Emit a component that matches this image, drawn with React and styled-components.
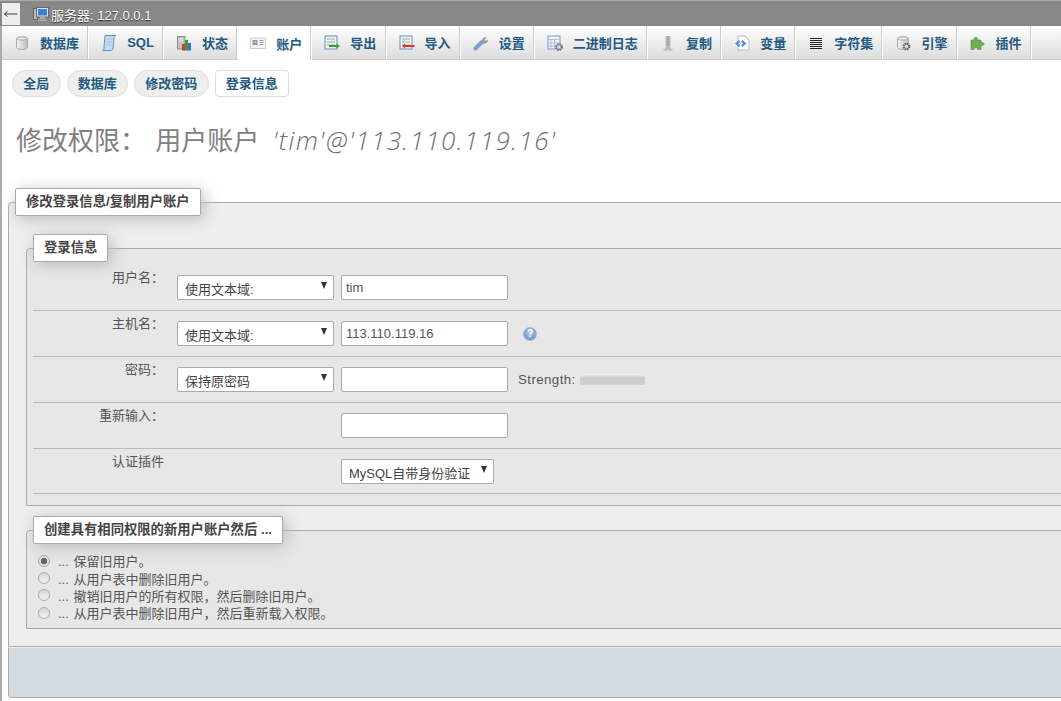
import React from 'react';
import styled, { createGlobalStyle } from 'styled-components';

const GlobalStyle = createGlobalStyle`
  html, body {
    margin: 0;
    padding: 0;
    background: #fff;
    overflow: hidden;
  }
  body {
    font-family: "Liberation Sans", "Noto Sans CJK SC", sans-serif;
    font-size: 13px;
    color: #444;
  }
`;

const Page = styled.div`
  width: 1061px;
  height: 701px;
  overflow: hidden;
`;

const TopBar = styled.div`
  height: 23px;
  padding: 2px 0 0 2px;
  background: #888;
  border-top: 1px solid #aaa;
  border-bottom: 1px solid #ddd;
  display: flex;
  align-items: flex-start;
  box-sizing: content-box;
  margin-bottom: -1px;
`;

const BackButton = styled.div`
  width: 18px;
  height: 22px;
  background: #eee;
  display: flex;
  align-items: center;
  justify-content: center;
`;

const ServerLink = styled.div`
  margin-left: 13px;
  height: 22px;
  display: flex;
  align-items: center;
  gap: 2px;
  color: #fff;
  font-size: 13px;
  text-shadow: 0 1px 1px #333;
`;

const Body = styled.div`
  border-left: 2px solid #aaa;
  height: 675px;
  overflow: hidden;
`;

const Menu = styled.nav`
  height: 33px;
  display: flex;
  background: linear-gradient(#fff, #dcdcdc);
  border-bottom: 1px solid #ccc;
`;

const MenuTab = styled.a`
  display: flex;
  align-items: center;
  gap: 10px;
  height: ${(p) => (p.$active ? '34px' : '33px')};
  padding: 0 9.15px 0 12px;
  border-right: 1px solid #fff;
  box-shadow: inset -1px 0 0 #ccc;
  color: #235a81;
  font-weight: bold;
  font-size: 13px;
  white-space: nowrap;
  background: ${(p) => (p.$active ? '#fff' : 'transparent')};
`;

const SubNav = styled.div`
  display: flex;
  gap: 6px;
  padding: 10px 0 0 10px;
`;

const SubTab = styled.a`
  height: 25px;
  line-height: 25px;
  padding: 0 10.25px;
  border: 1px solid #ddd;
  border-radius: ${(p) => (p.$active ? '4px' : '14px')};
  background: ${(p) => (p.$active ? '#fff' : '#eee')};
  color: #235a81;
  font-weight: bold;
`;

const Title = styled.h2`
  margin: 23px 0 0 14px;
  height: 40px;
  line-height: 40px;
  font-size: 26px;
  font-weight: normal;
  color: #808080;
  white-space: pre;
  word-spacing: 2px;
`;

const Host = styled.em`
  margin-left: 4px;
  font-family: "Open Sans", "Liberation Sans", sans-serif;
  font-style: italic;
  font-weight: 300;
  letter-spacing: 1.4px;
  color: #6f6f6f;
`;

const Main = styled.form`
  margin: 28px 0 0 6px;
  width: 1120px;
`;

const OuterSet = styled.fieldset`
  margin: 0;
  padding: 0 17px 17px;
  min-width: 0;
  background: #eee;
  border: 1px solid #aaa;
  border-radius: 4px 0 0 0;
  box-sizing: border-box;
`;

const InnerSet = styled.fieldset`
  margin: ${(p) => (p.$first ? '18px 0 0' : '10px 0 0')};
  padding: 0 6px;
  min-width: 0;
  background: #e7e7e7;
  border: 1px solid #aaa;
  border-radius: 4px 0 0 0;
`;

const Legend = styled.legend`
  height: 26px;
  line-height: 26px;
  padding: 0 10px;
  margin-left: ${(p) => p.$offset || 0}px;
  background: #fff;
  border: 1px solid #aaa;
  border-radius: 2px;
  box-shadow: 3px 3px 15px #bbb;
  font-size: 13.33px;
  font-weight: bold;
  color: #444;
  white-space: nowrap;
`;

const Rows = styled.div`
  padding: 3px 0 11px;
`;

const Row = styled.div`
  display: flex;
  align-items: flex-start;
  height: ${(p) => (p.$last ? '34px' : '35px')};
  padding: 10px 0 0;
  border-bottom: 1px solid #bbb;
`;

const Label = styled.label`
  width: 131px;
  flex: none;
  margin: -7px 13px 0 0;
  height: 20px;
  line-height: 20px;
  text-align: right;
  color: #555;
`;

const SelectBox = styled.div`
  position: relative;
  width: ${(p) => p.$width}px;
  height: 25px;
  flex: none;
  margin-right: ${(p) => p.$gap || 0}px;
`;

const Select = styled.select`
  appearance: none;
  width: 100%;
  height: 100%;
  padding: 3px 0 0 7px;
  background: #fff;
  border: 1px solid #aaa;
  border-radius: 2px;
  font: inherit;
  color: #444;
  box-sizing: border-box;
`;

const Arrow = styled.span`
  position: absolute;
  top: 7px;
  right: 7px;
  border-left: 3px solid transparent;
  border-right: 3px solid transparent;
  border-top: 7px solid #333;
`;

const TextInput = styled.input`
  width: 167px;
  height: 25px;
  flex: none;
  padding: 0 4px;
  background: #fff;
  border: 1px solid #aaa;
  border-radius: 2px;
  font: inherit;
  color: #555;
  box-sizing: border-box;
`;

const Spacer = styled.div`
  width: ${(p) => p.$width}px;
  flex: none;
`;

const HelpIcon = styled.span`
  width: 14px;
  height: 14px;
  margin: 6px 0 0 15px;
  border-radius: 50%;
  background: radial-gradient(circle at 50% 40%, #b7cbe6, #5a86c4);
  border: 1px solid #9db6d8;
  box-sizing: border-box;
  color: #fff;
  font-size: 10px;
  font-weight: bold;
  line-height: 12px;
  text-align: center;
`;

const Strength = styled.div`
  display: flex;
  align-items: center;
  height: 25px;
  margin-left: 10px;
  gap: 4px;
  color: #555;
  font-size: 13.33px;
  letter-spacing: 0.4px;
`;

const Meter = styled.div`
  width: 65px;
  height: 11px;
  background: linear-gradient(#f2f2f2, #ccc 35%, #d2d2d2);
`;

const Options = styled.div`
  padding: 8px 0 7px;
`;

const Option = styled.label`
  display: flex;
  align-items: center;
  height: 17.33px;
  color: #555;
  white-space: nowrap;
  word-spacing: 1px;
`;

const Radio = styled.input.attrs({ type: 'radio' })`
  appearance: none;
  width: 12px;
  height: 12px;
  margin: 0 8px 0 5px;
  flex: none;
  border: 1px solid #aaa;
  border-radius: 50%;
  background: ${(p) =>
    p.defaultChecked
      ? 'radial-gradient(circle, #666 0 3px, #e4e4e4 3.6px)'
      : 'linear-gradient(#d8d8d8, #f2f2f2)'};
`;

const Footer = styled.div`
  height: 49px;
  background: #d3dce3;
  border: 1px solid #aaa;
  border-top: 1px solid #eee;
  border-radius: 0 0 0 4px;
`;

const Gear = ({ x, y }) => (
  <>
    <circle cx={x} cy={y} r="2.8" fill="none" stroke="#666" strokeWidth="2.2" strokeDasharray="1.5 0.7" />
    <circle cx={x} cy={y} r="1.4" fill="#ddd" />
  </>
);

const BackArrow = () => (
  <svg width="14" height="8" viewBox="0 0 14 8">
    <path d="M0.500 4H13.500M0.500 4 3.500 1.500M0.500 4 3.500 6.500" fill="none" stroke="#4a3a3a" />
  </svg>
);

const DbIcon = ({ gear }) => (
  <svg width="16" height="16" viewBox="0 0 16 16">
    <defs>
      <linearGradient id="can">
        <stop offset="0" stopColor="#f4f4f4" />
        <stop offset="1" stopColor="#bdbdbd" />
      </linearGradient>
    </defs>
    <path d="M2.500 3.500C2.500 1.500 13.500 1.500 13.500 3.500V12.500C13.500 15 2.500 15 2.500 12.500Z" fill="url(#can)" stroke="#aaa" />
    <ellipse cx="8" cy="3.500" rx="5" ry="1.700" fill="#e8e8e8" stroke="#aaa" />
    {gear && <Gear x={11.5} y={11.5} />}
  </svg>
);

const SqlIcon = () => (
  <svg width="16" height="18" viewBox="0 0 16 18">
    <path d="M4 1.500H15C13.500 1.500 13 3 13 5L12 14C12 16 11 16.500 9 16.500H1.500C3 16 3 15 3 13Z" fill="#c5dcf2" stroke="#5b8fc7" />
    <path d="M6 5h5M5.700 8h5M5.400 11h5" stroke="#9cc0e4" />
  </svg>
);

const StatusIcon = () => (
  <svg width="16" height="16" viewBox="0 0 16 16">
    <rect x="1.500" y="1.500" width="7.500" height="12.500" fill="#c4c4c4" stroke="#8a8a8a" />
    <path d="M3 4h4M3 6h4" stroke="#eee" />
    <rect x="6" y="9" width="3" height="6.500" fill="#d33" />
    <rect x="9" y="5" width="3" height="10.500" fill="#3a9a3a" />
    <rect x="12" y="8" width="3" height="7.500" fill="#3a70c9" />
  </svg>
);

const CardIcon = () => (
  <svg width="16" height="16" viewBox="0 0 16 16">
    <rect x="0.500" y="3" width="15" height="10.500" fill="#f6f6f6" stroke="#ccc" />
    <rect x="2.500" y="5" width="5" height="5" fill="#6f9fd8" />
    <circle cx="5" cy="7" r="1.300" fill="#e8b070" />
    <path d="M9.500 5.500h4M9.500 7.500h4M9.500 9.500h4" stroke="#999" />
  </svg>
);

const DocIcon = ({ color, reverse }) => (
  <svg width="16" height="16" viewBox="0 0 16 16">
    <rect x="1" y="1" width="12" height="13" fill="#eef3fa" stroke="#6a8fc4" />
    <path d="M3 4h8M3 7h8M3 10h8" stroke="#9ab88a" />
    {reverse ? (
      <path d="M3 11 6 8.500V10H15.500V12H6V13.500Z" fill={color} />
    ) : (
      <path d="M16 11 12.500 8.500V10H5V12H12.500V13.500Z" fill={color} />
    )}
  </svg>
);

const WrenchIcon = () => (
  <svg width="16" height="16" viewBox="0 0 16 16">
    <path d="M2.500 13.500 9 7" stroke="#7ba0d8" strokeWidth="4" strokeLinecap="round" />
    <path d="M9 8C8 5 10 1.500 14 2L11.500 4.500 12.500 6 15 4.500C15 8 12 9.500 9 8Z" fill="#999" />
  </svg>
);

const LogIcon = () => (
  <svg width="16" height="16" viewBox="0 0 16 16">
    <rect x="1" y="1" width="12" height="13" fill="#f2f6fb" stroke="#7c9cc9" />
    <path d="M1 4.500h12M4 4.500V14M7.500 4.500V14M1 8h12M1 11h12" stroke="#a9c0de" />
    <Gear x={12} y={12} />
  </svg>
);

const ReplicateIcon = () => (
  <svg width="16" height="16" viewBox="0 0 16 16">
    <path d="M6.500 1V11M9.500 1V11" stroke="#bbb" strokeWidth="2" />
    <path d="M8 1V11" stroke="#777" />
    <path d="M3.500 14H12.500V15.500H3.500ZM6 11H10L11 14H5Z" fill="#bbb" />
  </svg>
);

const VarIcon = () => (
  <svg width="16" height="16" viewBox="0 0 16 16">
    <path d="M4 1H11L15 5V15H4Z" fill="#fff" stroke="#bbb" />
    <path d="M5 5 1 8.500 5 12 6.500 10.500 4.500 8.500 6.500 6.500ZM8.500 5 12.500 8.500 8.500 12 7 10.500 9 8.500 7 6.500Z" fill="#4f8fe0" />
  </svg>
);

const CharsetIcon = () => (
  <svg width="16" height="16" viewBox="0 0 16 16">
    <path d="M2 3.500h12M2 5.500h12M2 7.500h12M2 9.500h12M2 11.500h12M2 13.500h12" stroke="#222" />
  </svg>
);

const PluginIcon = () => (
  <svg width="16" height="16" viewBox="0 0 16 16">
    <path d="M1 5H4C3 2 8 1 7.500 5H11V7.500C15 6.500 15 11.500 11 10.500V14.500H7.500C8 12 3.500 12 4 14.500H1Z" fill="#6ab04c" stroke="#4f9440" strokeWidth="0.600" />
  </svg>
);

const ServerIcon = () => (
  <svg width="16" height="16" viewBox="0 0 16 16">
    <rect x="0.500" y="2.500" width="4" height="11" fill="#bbb" stroke="#666" />
    <rect x="3.500" y="1.500" width="12" height="9.500" fill="#dde3ea" stroke="#667" />
    <rect x="5" y="3" width="9" height="6.500" fill="#3f7fd0" />
    <path d="M7 11h5v2H7ZM5 13.500h9v1.500H5Z" fill="#aaa" />
  </svg>
);

const tabs = [
  ['数据库', <DbIcon />],
  ['SQL', <SqlIcon />],
  ['状态', <StatusIcon />],
  ['账户', <CardIcon />, true],
  ['导出', <DocIcon color="#3a9a3a" />],
  ['导入', <DocIcon color="#e03030" reverse />],
  ['设置', <WrenchIcon />],
  ['二进制日志', <LogIcon />],
  ['复制', <ReplicateIcon />],
  ['变量', <VarIcon />],
  ['字符集', <CharsetIcon />],
  ['引擎', <DbIcon gear />],
  ['插件', <PluginIcon />],
];

const subTabs = ['全局', '数据库', '修改密码'];

const radios = [
  '... 保留旧用户。',
  '... 从用户表中删除旧用户。',
  '... 撤销旧用户的所有权限，然后删除旧用户。',
  '... 从用户表中删除旧用户，然后重新载入权限。',
];

const Choice = ({ value, width = 157, gap = 7 }) => (
  <SelectBox $width={width} $gap={gap}>
    <Select defaultValue={value}>
      <option>{value}</option>
    </Select>
    <Arrow />
  </SelectBox>
);

export default function App() {
  return (
    <Page>
      <GlobalStyle />
      <TopBar>
        <BackButton>
          <BackArrow />
        </BackButton>
        <ServerLink>
          <ServerIcon />
          服务器: 127.0.0.1
        </ServerLink>
      </TopBar>
      <Body>
        <Menu>
          {tabs.map(([name, icon, active]) => (
            <MenuTab key={name} $active={active}>
              {icon}
              {name}
            </MenuTab>
          ))}
        </Menu>
        <SubNav>
          {subTabs.map((name) => (
            <SubTab key={name}>{name}</SubTab>
          ))}
          <SubTab $active>登录信息</SubTab>
        </SubNav>
        <Title>
          修改权限： 用户账户 <Host>'tim'@'113.110.119.16'</Host>
        </Title>
        <Main>
          <OuterSet>
            <Legend $offset={-11}>修改登录信息/复制用户账户</Legend>
            <InnerSet $first>
              <Legend>登录信息</Legend>
              <Rows>
                <Row>
                  <Label>用户名：</Label>
                  <Choice value="使用文本域:" />
                  <TextInput defaultValue="tim" />
                </Row>
                <Row>
                  <Label>主机名：</Label>
                  <Choice value="使用文本域:" />
                  <TextInput defaultValue="113.110.119.16" />
                  <HelpIcon>?</HelpIcon>
                </Row>
                <Row>
                  <Label>密码：</Label>
                  <Choice value="保持原密码" />
                  <TextInput />
                  <Strength>
                    Strength:
                    <Meter />
                  </Strength>
                </Row>
                <Row>
                  <Label>重新输入：</Label>
                  <Spacer $width={164} />
                  <TextInput />
                </Row>
                <Row $last>
                  <Label>认证插件</Label>
                  <Spacer $width={164} />
                  <Choice value="MySQL自带身份验证" width={153} gap={0} />
                </Row>
              </Rows>
            </InnerSet>
            <InnerSet>
              <Legend>创建具有相同权限的新用户账户然后 ...</Legend>
              <Options>
                {radios.map((text, i) => (
                  <Option key={text}>
                    <Radio name="mode" defaultChecked={i === 0} />
                    {text}
                  </Option>
                ))}
              </Options>
            </InnerSet>
          </OuterSet>
          <Footer />
        </Main>
      </Body>
    </Page>
  );
}
